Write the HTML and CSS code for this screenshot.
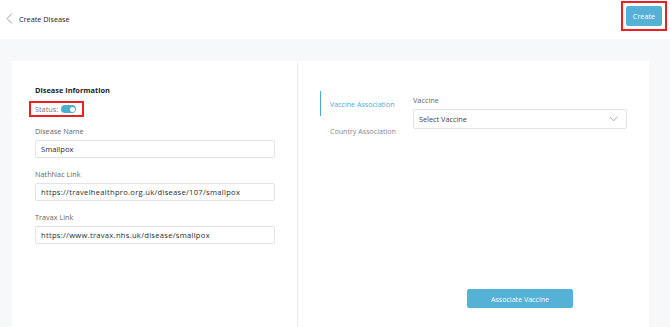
FILE: index.html
```html
<!DOCTYPE html>
<html>
<head>
<meta charset="utf-8">
<link rel="stylesheet" href="styles.css">
</head>
<body>
<header class="topbar">
  <div class="title">
    <svg class="back" width="7" height="11" viewBox="0 0 7 11"><path d="M6 0.5 L1 5.5 L6 10.5" fill="none" stroke="#9a9a9a" stroke-width="1"/></svg>
    <span>Create Disease</span>
  </div>
  <div class="create-wrap">
    <button class="btn create">Create</button>
  </div>
</header>
<main class="page">
  <section class="card">
    <div class="left">
      <h2 class="section-title">Disease Information</h2>
      <div class="status-wrap">
        <span class="status-label">Status:</span>
        <span class="toggle"><span class="knob"></span></span>
      </div>
      <div class="field first">
        <label>Disease Name</label>
        <div class="input">Smallpox</div>
      </div>
      <div class="field">
        <label>NathNac Link</label>
        <div class="input url">https://travelhealthpro.org.uk/disease/107/smallpox</div>
      </div>
      <div class="field">
        <label>Travax Link</label>
        <div class="input url">https://www.travax.nhs.uk/disease/smallpox</div>
      </div>
    </div>
    <div class="right">
      <nav class="tabs">
        <div class="tab active">Vaccine Association</div>
        <div class="tab">Country Association</div>
      </nav>
      <div class="assoc">
        <label>Vaccine</label>
        <div class="select">
          <span>Select Vaccine</span>
          <svg width="9" height="6" viewBox="0 0 9 6"><path d="M0.5 0.8 L4.5 4.8 L8.5 0.8" fill="none" stroke="#a0a0a0" stroke-width="0.9"/></svg>
        </div>
        <div class="spacer"></div>
        <div class="btn-row">
          <button class="btn associate">Associate Vaccine</button>
        </div>
      </div>
    </div>
  </section>
</main>
</body>
</html>
```
FILE: styles.css
```css
* { box-sizing: border-box; }
html, body { margin: 0; padding: 0; }
body {
  font-family: "Open Sans", "Liberation Sans", sans-serif;
  background: #f7f8fa;
  color: #333;
  width: 670px;
  height: 327px;
  overflow: hidden;
}
.topbar {
  height: 39px;
  background: #fff;
  display: flex;
  align-items: center;
  justify-content: space-between;
}
.title {
  display: flex;
  align-items: center;
  padding-left: 6px;
  margin-top: -2px;
  font-size: 7.3px;
  color: #222;
}
.back { margin-right: 6px; }
.create-wrap {
  margin-right: 3px;
  margin-top: -7px;
  border: 2px solid #e8231f;
  padding: 3px 3px;
  display: flex;
}
.btn {
  font-family: inherit;
  border: none;
  background: #55b1d5;
  color: #fff;
  border-radius: 2px;
  cursor: pointer;
}
.create {
  width: 36px;
  height: 20px;
  font-size: 7.3px;
  padding: 0;
}
.page {
  padding: 22px 21px 0 12px;
}
.card {
  background: #fff;
  height: 280px;
  display: flex;
}
.left {
  width: 286px;
  border-right: 1px solid #ececec;
  padding: 23px 22px 0 23px;
}
.section-title {
  margin: 0;
  font-size: 7.4px;
  font-weight: 700;
  color: #222;
  line-height: 12px;
}
.status-wrap {
  margin: 5px 0 0 -6px;
  width: 55px;
  height: 16px;
  border: 2px solid #e8231f;
  display: flex;
  align-items: center;
  padding-left: 4px;
  gap: 3px;
}
.status-label { font-size: 7.3px; color: #777; }
.toggle {
  width: 15px;
  height: 8px;
  border-radius: 4px;
  background: #4aaed3;
  position: relative;
  display: inline-block;
}
.knob {
  position: absolute;
  right: 1.5px;
  top: 1.5px;
  width: 5px;
  height: 5px;
  border-radius: 50%;
  background: #fff;
}
.field { margin-top: 11px; }
.field.first { margin-top: 9px; }
label {
  display: block;
  font-size: 7.3px;
  color: #666;
  line-height: 10px;
  margin-bottom: 4px;
}
.input {
  height: 18px;
  border: 1px solid #e3e3e3;
  border-radius: 2px;
  font-size: 7.6px;
  color: #2a2a2a;
  padding-left: 5px;
  display: flex;
  align-items: center;
}
.input.url { letter-spacing: 0.28px; }
.right {
  flex: 1;
  display: flex;
  padding: 30px 22px 33px 22px;
}
.tabs {
  width: 93px;
  display: flex;
  flex-direction: column;
}
.tab {
  font-size: 7.1px;
  color: #888;
  height: 25px;
  display: flex;
  align-items: center;
  padding-left: 9px;
  border-left: 1px solid transparent;
  white-space: nowrap;
}
.tab + .tab { margin-top: 2px; }
.tab.active {
  color: #4aaed3;
  border-left-color: #4aaed3;
}
.assoc {
  flex: 1;
  display: flex;
  flex-direction: column;
  padding-top: 4px;
}
.select {
  height: 20px;
  border: 1px solid #e3e3e3;
  border-radius: 2px;
  font-size: 7.3px;
  color: #444;
  padding: 0 8px 0 5px;
  display: flex;
  align-items: center;
  justify-content: space-between;
}
.spacer { flex: 1; }
.btn-row {
  display: flex;
  justify-content: center;
}
.associate {
  width: 106px;
  height: 19px;
  font-size: 7.1px;
  padding: 0;
}
```
